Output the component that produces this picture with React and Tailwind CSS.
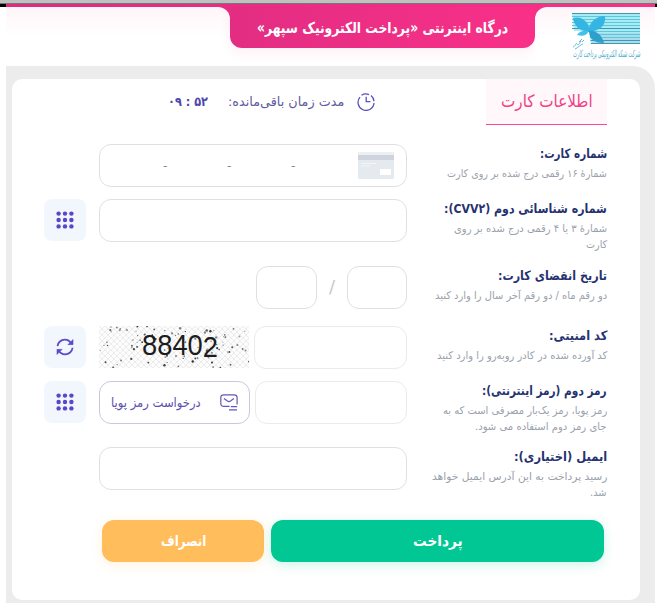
import { useLayoutEffect, useRef } from 'react';

// Single text line squeezed or stretched to a known width.
function Line({ w, className = '', dir = 'rtl', children }) {
  const text = useRef(null);
  useLayoutEffect(() => {
    const natural = text.current.offsetWidth;
    if (natural) text.current.style.transform = `scaleX(${w / natural})`;
  }, [w]);
  return (
    <span dir="ltr" className={`block shrink-0 whitespace-nowrap ${className}`} style={{ width: w }}>
      <span ref={text} dir={dir} className="inline-block origin-left whitespace-nowrap">
        {children}
      </span>
    </span>
  );
}

function Label({ title, w, hints }) {
  return (
    <div className="-mt-0.5 ml-auto flex flex-col items-end">
      <Line w={w} className="text-[13px] leading-6 font-bold text-[#263270]">{title}</Line>
      <div className="-mt-px flex flex-col items-end">
        {hints.map(([text, width]) => (
          <Line key={text} w={width} className="text-[10.5px] leading-4 text-[#9aa1ab]">{text}</Line>
        ))}
      </div>
    </div>
  );
}

function Row({ height, tool, label, children }) {
  return (
    <div className={`flex items-start ${height}`}>
      <div className="mr-[13px] w-[42px] shrink-0">{tool}</div>
      <div className="flex w-[308px] shrink-0 justify-end">{children}</div>
      {label}
    </div>
  );
}

function Box({ className = '', children }) {
  return <div className={`flex h-[43px] items-center rounded-xl border border-[#e0e0e2] bg-white ${className}`}>{children}</div>;
}

function Tool({ children }) {
  return <button className="flex h-[42px] w-[42px] items-center justify-center rounded-lg bg-[#f2f6fd]">{children}</button>;
}

function Keypad() {
  return (
    <svg width="18" height="18" viewBox="0 0 18 18" fill="#5847c9">
      {[2.6, 9, 15.4].map((y) => [2.6, 9, 15.4].map((x) => <circle key={`${x}-${y}`} cx={x} cy={y} r="2.2" />))}
    </svg>
  );
}

function Refresh() {
  return (
    <svg width="18" height="18" viewBox="0 0 19 19" fill="none" stroke="#5b4bc8" strokeWidth="1.9">
      <path d="M1.600 8.500C2 4.600 5.300 1.800 9.300 1.800c3 0 5.300 1.500 6.900 4.200" />
      <path d="M17.500 10.300c-.5 4-3.900 6.900-7.900 6.900-3.100 0-5.500-1.700-6.900-4.500" />
      <path d="M18 1.500v5.500h-5.500ZM1 17.500v-5.500h5.500Z" fill="#5b4bc8" strokeWidth=".5" />
    </svg>
  );
}

function Clock() {
  return (
    <svg width="18" height="18" viewBox="0 0 18 18" fill="none" stroke="#5a50b8" strokeWidth="1.3">
      <path d="M4.500 2.300A8 8 0 0 1 12 1.600M14 2.600a8 8 0 0 1 3 5.600M17 10a8 8 0 1 1-14-5.900" />
      <path d="M9.200 3.700v4.900h4.200" />
    </svg>
  );
}

function Mail() {
  return (
    <svg width="18" height="17" viewBox="0 0 18 17" fill="none" stroke="#6357bd" strokeWidth="1.2">
      <path d="M9.500 12.400H3.800c-2 0-3-1-3-2.800V3.600c0-1.800 1-2.800 3-2.800h10.300c2 0 3 1 3 2.800v6.800" />
      <path d="M4 4.500 7.400 7c1 .7 2.100.7 3.100 0l3.400-2.500M10.800 12.600h6.300M9 15.800h8" />
    </svg>
  );
}

function BankCard() {
  return (
    <svg width="36" height="27" viewBox="0 0 36 27">
      <rect width="36" height="27" rx="1" fill="#e5eaef" />
      <rect width="36" height="3" fill="#edf0f3" />
      <rect y="3" width="36" height="5" fill="#cfd3de" />
      <path d="M3 11.500h15M3 14h9" stroke="#f3f6f8" />
      <rect x="22" y="17" width="11" height="6" fill="#fff" />
    </svg>
  );
}

function Logo() {
  const bars = [0.5, 3.500, 6.500, 9.500, 12.500, 15.500, 18.500, 21.500, 24.500, 27.500, 30.500];
  return (
    <div className="flex w-[68px] flex-col items-center">
      <svg width="68" height="42" viewBox="0 0 68 42" className="shrink-0">
        <path d="M0 0h68v31H19L14 18H2Z" fill="#a5ecf7" />
        <path d="M22 20h46v11H20z" fill="#a9dcee" />
        {bars.map((y, i) => (
          <path key={y} d={`M${y < 18 ? 0 : 18} ${y}H68`} stroke={i === 0 || i === 5 || i > 8 ? '#4397aa' : '#62c5d5'} strokeWidth="1" />
        ))}
        <path d="M1 5c3-1 8-1 11 2 4 3 5 6 6 11C9 19 3 15 1 5Z" fill="#35b5e3" />
        <path d="M16 19C17 11 22 3 33 3c1 9-4 15-17 16Z" fill="#35b5e3" />
        <path d="M16 18c8-1 14 4 16 12-9 0-14-3-16-12Z" fill="#2f9fce" />
        <path d="M0 19h17l2 12-4 2H0Z" fill="#fff" />
        <path d="M17 18c-5-1-10 0-12 4 6 2 10 0 12-4Z" fill="#45c0e6" />
        <path d="M1 34c2 0 3-5 4-3s3-1 4-3M3 36c3-1 6-5 8-5M7 29l3-3M10 29l2-2" stroke="#4fb3d4" strokeWidth=".9" fill="none" />
      </svg>
      <Line w={67} className="-mt-[7px] text-[10px] leading-[12px] text-[#49a8c8] italic">شرکت شبکه الکترونیکی پرداخت کارت</Line>
    </div>
  );
}

const specks = (() => {
  let seed = 90211;
  const next = () => {
    seed = (seed * 16807) % 2147483647;
    return seed / 2147483647;
  };
  return Array.from({ length: 95 }, () => [next() * 150, next() * 42, 0.5 + next() * 0.75, 0.35 + next() * 0.6]);
})();

function Captcha() {
  return (
    <svg width="150" height="42" viewBox="0 0 150 42" className="mr-auto">
      <defs>
        <pattern id="mesh" width="6" height="6" patternUnits="userSpaceOnUse">
          <path d="M0 0l6 6M6 0L0 6" stroke="#ececec" strokeWidth="1" />
        </pattern>
      </defs>
      <rect width="150" height="42" fill="#fcfcfc" />
      <rect width="150" height="42" fill="url(#mesh)" />
      {specks.map(([x, y, r, o], i) => (
        <circle key={i} cx={x} cy={y} r={r} fill="#222" opacity={o} />
      ))}
      <text
        x="43"
        y="29"
        dy="0 0 0 0 1.500"
        textLength="76"
        lengthAdjust="spacingAndGlyphs"
        fontFamily="'Liberation Sans'"
        fontSize="30"
        fill="#1c1c1c"
      >
        88402
      </text>
    </svg>
  );
}

export default function App() {
  return (
    <div className="h-[603px] w-[657px] overflow-hidden bg-white font-['DejaVu_Sans',sans-serif]">
      <div className="h-1 border-b border-[#777] bg-[#c1c1c1]" />
      <div className="flex h-[3px] bg-black">
        <div className="mr-[2px] ml-[6px] flex-1 bg-linear-to-r from-[#dc2c80] to-[#fb3089]" />
      </div>

      <header className="mr-[2px] ml-[6px] flex h-[59px] items-start bg-[linear-gradient(to_right,#dc2c80,#fb3089)] bg-[length:100%_20px] bg-no-repeat">
        <div className="h-[59px] w-[224px] rounded-tr-xl bg-linear-to-b from-[#fff5f9] to-white to-50%" />
        <div className="flex h-[41px] w-[305px] items-center justify-center rounded-b-xl bg-linear-to-r from-[#e22d83] to-[#f93088] shadow-[0_5px_12px_#f42f8614]">
          <Line w={251} className="text-[15px] leading-6 font-bold text-white">درگاه اینترنتی «پرداخت الکترونیک سپهر»</Line>
        </div>
        <div className="flex h-[59px] flex-1 justify-end rounded-tl-xl bg-linear-to-b from-[#fff5f9] to-white to-50% pt-1.5 pr-[15px]">
          <Logo />
        </div>
      </header>

      <main className="mr-[2px] ml-[6px] h-[537px] rounded-tr-[22px] bg-[#ececec] pt-[13px] pl-[6px]">
        <section className="h-[521px] w-[628px] rounded-[10px] bg-white pr-[33px] pl-[32px]">
          <div className="flex h-[65px] items-start">
            <div className="ml-[124px] flex h-[46px] items-center">
              <Line w={40} dir="ltr" className="text-[13px] font-bold text-[#5048ad]">۰۹ : ۵۲</Line>
              <Line w={116} className="ml-5 text-[13px] text-[#625aa0]">مدت زمان باقی‌مانده:</Line>
              <span className="ml-[13px]"><Clock /></span>
            </div>
            <div className="ml-auto flex h-[46px] w-[121px] items-center justify-center border-b border-[#f84c92] bg-[#fff7f9]">
              <Line w={92} className="text-[17px] font-medium text-[#f13f85]">اطلاعات کارت</Line>
            </div>
          </div>

          <Row height="h-[55px]" label={<Label title="شماره کارت:" w={67} hints={[['شمارهٔ ۱۶ رقمی درج شده بر روی کارت', 160]]} />}>
            <Box className="w-full justify-end pr-3">
              {['a', 'b', 'c'].map((k) => (
                <span key={k} className="w-16 text-[12px] text-[#888]">-</span>
              ))}
              <span className="ml-[3px]"><BankCard /></span>
            </Box>
          </Row>
          <Row
            height="h-[67px]"
            tool={<Tool><Keypad /></Tool>}
            label={<Label title="شماره شناسائی دوم (CVV۲):" w={163} hints={[['شمارهٔ ۳ یا ۴ رقمی درج شده بر روی', 153], ['کارت', 21]]} />}
          >
            <Box className="w-full" />
          </Row>
          <Row height="h-[60px]" label={<Label title="تاریخ انقضای کارت:" w={109} hints={[['دو رقم ماه / دو رقم آخر سال را وارد کنید', 172]]} />}>
            <Box className="w-[61px]" />
            <span className="w-[30px] text-center text-[18px] leading-[42px] text-[#c9c9cb]">/</span>
            <Box className="w-[60px]" />
          </Row>
          <Row
            height="h-[55px]"
            tool={<Tool><Refresh /></Tool>}
            label={<Label title="کد امنیتی:" w={58} hints={[['کد آورده شده در کادر روبه‌رو را وارد کنید', 170]]} />}
          >
            <Captcha />
            <Box className="w-[153px] border-[#ebebed]" />
          </Row>
          <Row
            height="h-[66px]"
            tool={<Tool><Keypad /></Tool>}
            label={<Label title="رمز دوم (رمز اینترنتی):" w={125} hints={[['رمز پویا، رمز یک‌بار مصرفی است که به', 164], ['جای رمز دوم استفاده می شود.', 132]]} />}
          >
            <button className="mr-auto flex h-[43px] w-[151px] items-center justify-between rounded-xl border border-[#cbc8de] px-[11px]">
              <Line w={90} className="text-[13px] text-[#5c51ad]">درخواست رمز پویا</Line>
              <Mail />
            </button>
            <Box className="w-[152px] border-[#ebebed]" />
          </Row>
          <Row height="h-[73px]" label={<Label title="ایمیل (اختیاری):" w={93} hints={[['رسید پرداخت به این آدرس ایمیل خواهد', 175], ['شد.', 17]]} />}>
            <Box className="w-full" />
          </Row>

          <div className="flex gap-[7px] pl-[58px]">
            <button className="flex h-[42px] w-[162px] items-center justify-center rounded-xl bg-[#ffbd5b] shadow-[0_3px_12px_#ffbd5b33]">
              <Line w={45} className="text-[15px] font-bold text-white">انصراف</Line>
            </button>
            <button className="flex h-[42px] w-[333px] items-center justify-center rounded-xl bg-[#00c794] shadow-[0_3px_12px_#00c79433]">
              <Line w={50} className="text-[15px] font-bold text-white">پرداخت</Line>
            </button>
          </div>
        </section>
      </main>
    </div>
  );
}
